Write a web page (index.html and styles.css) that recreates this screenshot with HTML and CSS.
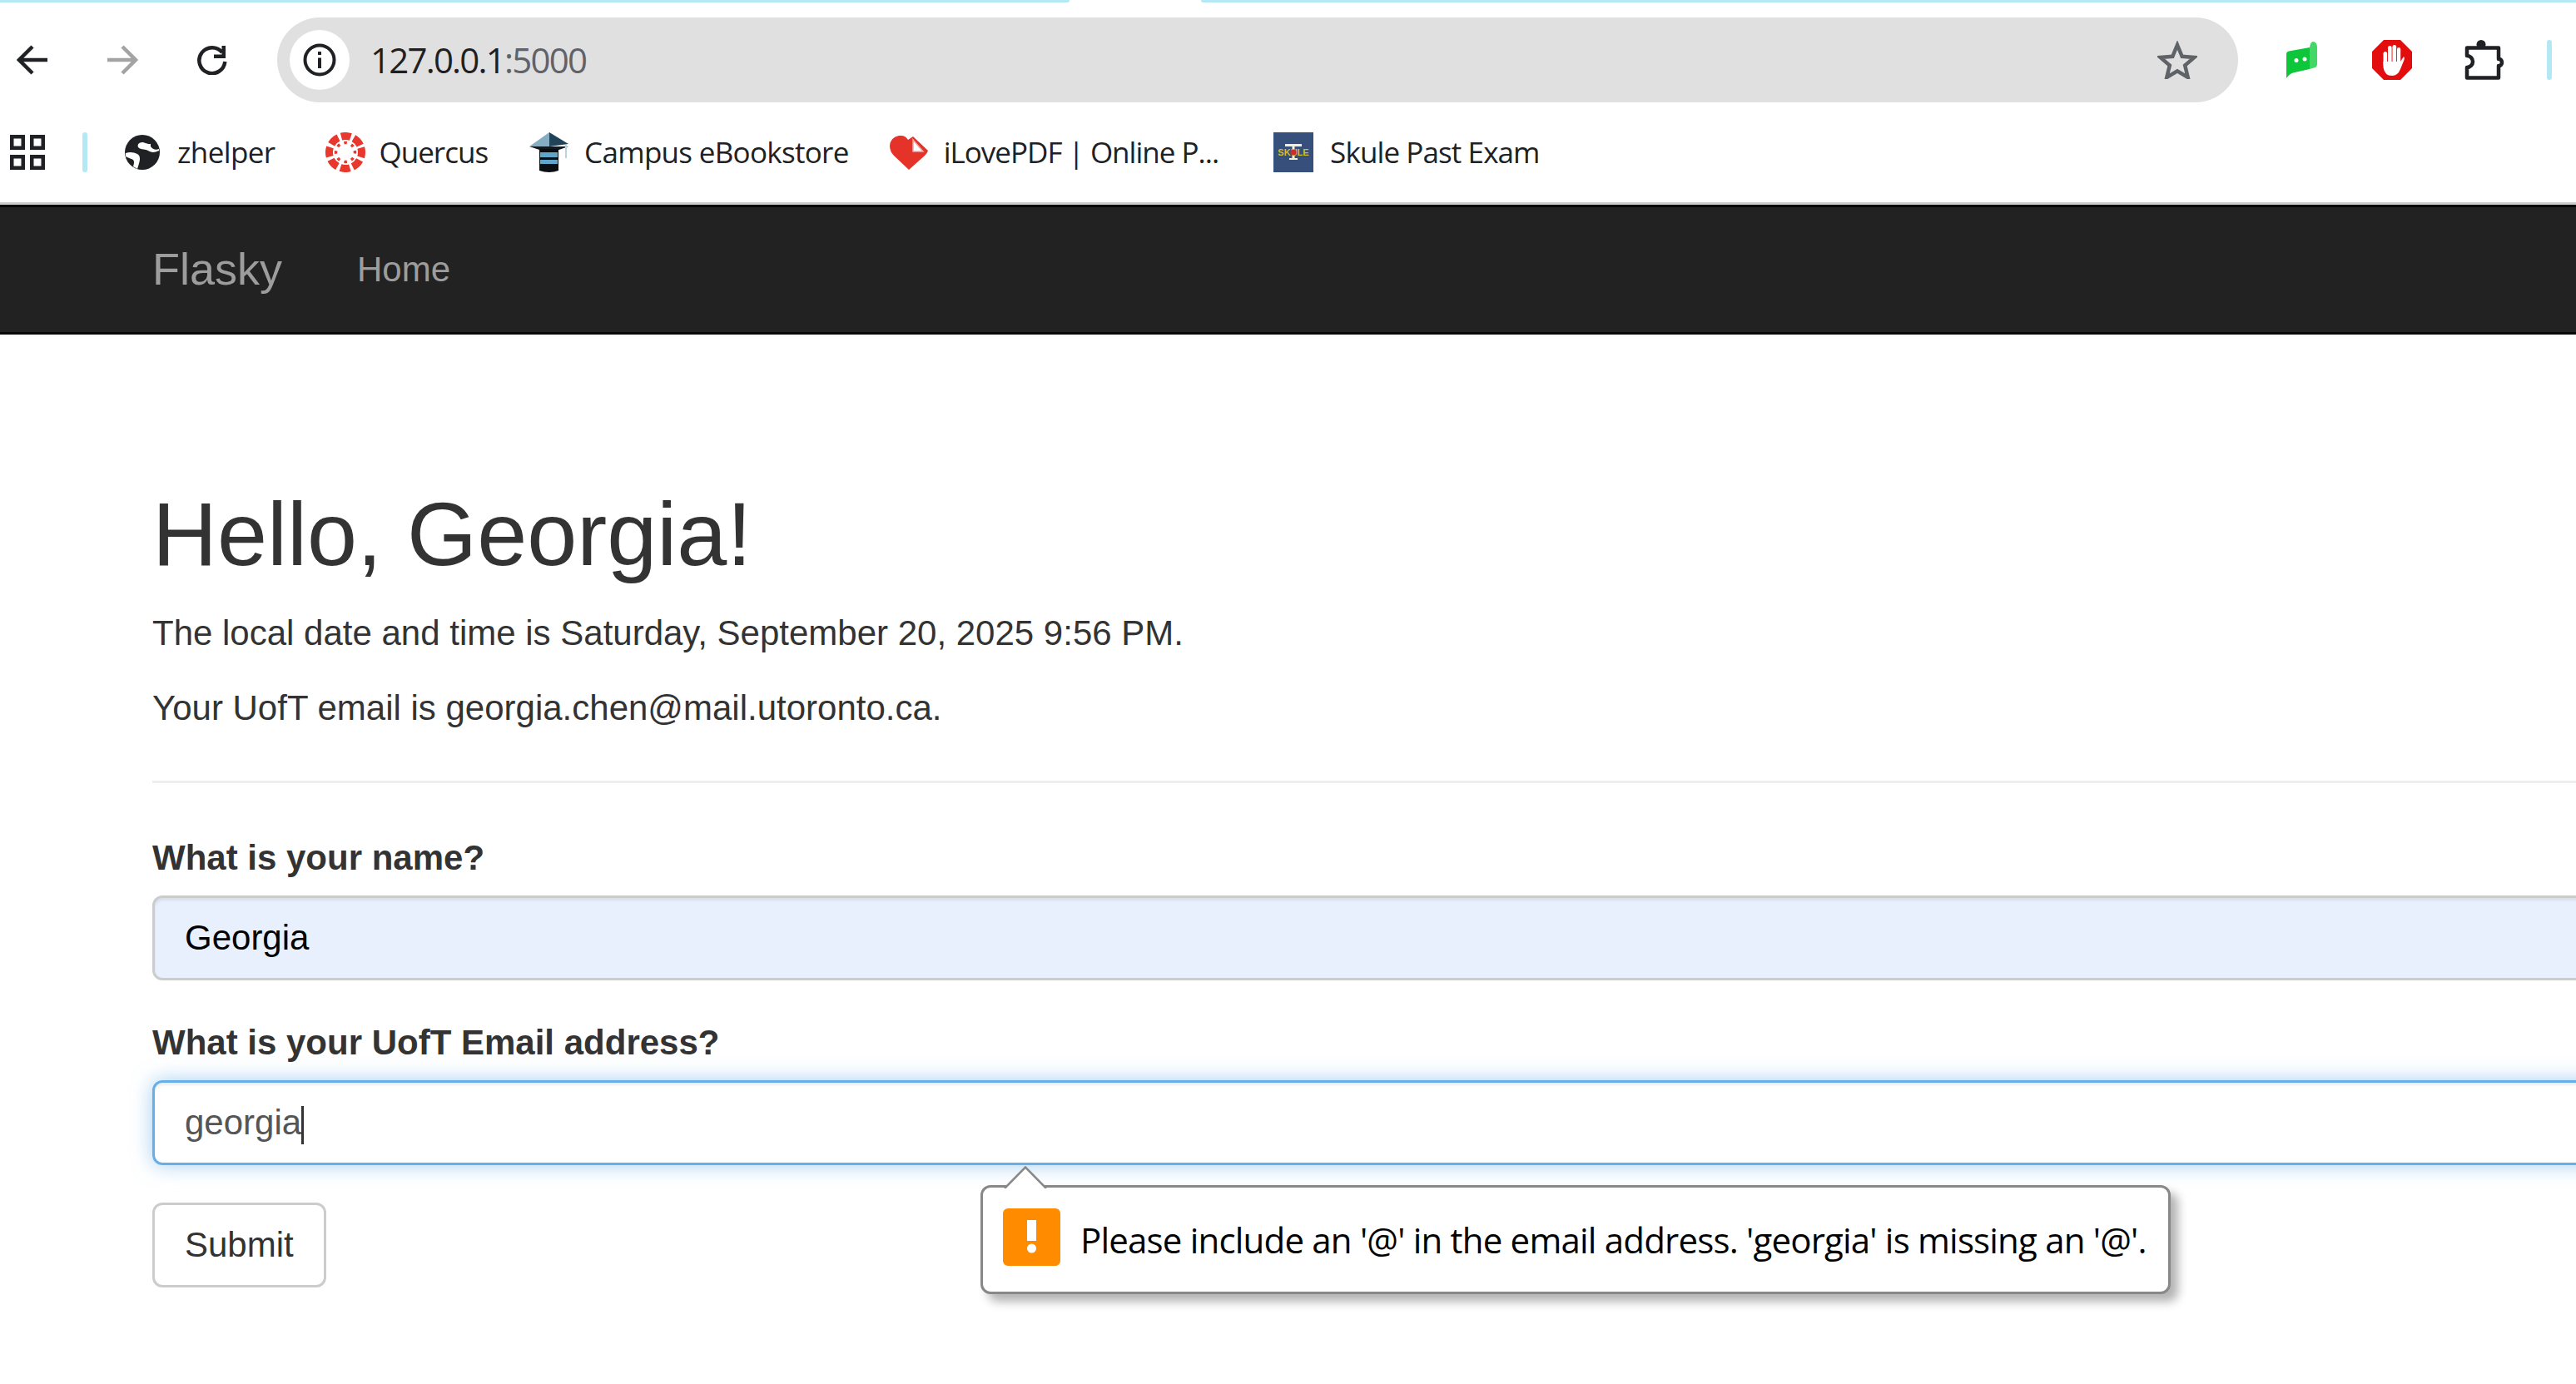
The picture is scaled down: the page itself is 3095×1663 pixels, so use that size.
FILE: index.html
```html
<!DOCTYPE html>
<html lang="en">
<head>
<meta charset="utf-8">
<title>Flasky</title>
<link rel="stylesheet" href="styles.css">
</head>
<body>
<div class="strip"><div class="strip-left"></div><div class="strip-right"></div></div>
<header class="toolbar">
  <svg class="nav-icon" viewBox="0 0 38 36"><path d="M37 18H4M19 2 3 18l16 16" fill="none" stroke="#202124" stroke-width="4.5"/></svg>
  <svg class="nav-icon" viewBox="0 0 38 36"><path d="M1 18h33M19 2l16 16-16 16" fill="none" stroke="#a3a3a3" stroke-width="4.5"/></svg>
  <svg class="nav-icon" viewBox="0 0 38 36"><path d="M31 9A15.500 15.500 0 1 0 34.300 20" fill="none" stroke="#202124" stroke-width="4.500"/><path d="M35 1v15H21v-4.500h9.500V1z" fill="#202124"/></svg>
  <div class="omnibox">
    <div class="chip"><svg class="info" viewBox="0 0 40 40"><circle cx="20" cy="20" r="17.500" fill="none" stroke="#202124" stroke-width="4"/><path d="M18 17.500h4V30h-4zM18 10h4v4h-4z" fill="#202124"/></svg></div>
    <div class="url">127.0.0.1<span class="port">:5000</span></div>
    <svg class="star" viewBox="0 0 48 46"><path d="M24 5l5.700 13.800 14.800 1.100-11.300 9.700 3.500 14.400L24 36.300 11.300 44l3.500-14.400L3.500 19.900l14.800-1.100z" fill="none" stroke="#5f6368" stroke-width="4.500"/></svg>
  </div>
  <svg class="ext-green" viewBox="0 0 37 44"><path d="M0 15q0-3 3-3.500L28 7v26l-18 4Q4 38 0 44z" fill="#0dc63a"/><path d="M28 7q1-7 4-7 5 0 5 8v19q0 4-4 4.500L28 33z" fill="#45d668"/><circle cx="12" cy="22.500" r="2.500" fill="#fff"/><circle cx="22" cy="21" r="2.500" fill="#fff"/></svg>
  <svg class="ext-abp" viewBox="0 0 48 48"><path d="M14 0h20l14 14v20L34 48H14L0 34V14z" fill="#e40d0d"/><g fill="#fff"><rect x="13.500" y="14" width="4.600" height="18" rx="2.300"/><rect x="19" y="7" width="4.600" height="22" rx="2.300"/><rect x="24.500" y="6" width="4.600" height="22" rx="2.300"/><rect x="30" y="9" width="4.200" height="22" rx="2.100"/><path d="M13.500 26H34l4-6q1.500 1 .5 4L34 35q-3 8-10 8-9 0-10.500-10z"/></g></svg>
  <svg class="ext-puzzle" viewBox="0 0 48 48"><path d="M3 9.500h38V23h1.500a4.500 4.500 0 0 1 0 8H41v14.500H3V33a7 7 0 0 0 0-14z" fill="none" stroke="#202124" stroke-width="4.500" stroke-linejoin="round"/><circle cx="20" cy="5.500" r="5.500" fill="#202124"/></svg>
  <div class="tool-sep"></div>
</header>
<nav class="bookmarks">
  <svg class="apps" viewBox="0 0 42 42"><g fill="none" stroke="#202124" stroke-width="4.500"><rect x="2.250" y="2.250" width="13.500" height="13.500"/><rect x="26.250" y="2.250" width="13.500" height="13.500"/><rect x="2.250" y="26.250" width="13.500" height="13.500"/><rect x="26.250" y="26.250" width="13.500" height="13.500"/></g></svg>
  <div class="bm-sep"></div>
  <div class="bm bm-zhelper">
    <svg class="fav-42" viewBox="0 0 42 42"><circle cx="21" cy="21" r="21" fill="#202124"/><path d="M31 11c-6 0-7-2-10-2-5 0-7 4-4 7 3 2 8 1 11 3 3 2 7 3 13 0v-2c-4 2-8 0-10-3zM1 22c5-2 10-1 14 1 5 3 3 9 0 18l-5-3c2-6 1-8-2-9-3-1-5-2-7-3z" fill="#fff"/></svg>
    <span>zhelper</span>
  </div>
  <div class="bm bm-quercus">
    <svg class="fav-48" viewBox="0 0 48 48"><circle cx="24" cy="24" r="19.500" fill="none" stroke="#e8382d" stroke-width="9" stroke-dasharray="11.500 3.810" transform="rotate(-16.500 24 24)"/><circle cx="24" cy="24" r="11.500" fill="none" stroke="#e8382d" stroke-width="3.500" stroke-dasharray="3.500 5.530" transform="rotate(-10 24 24)"/></svg>
    <span>Quercus</span>
  </div>
  <div class="bm bm-campus">
    <svg class="fav-47" viewBox="0 0 47 48"><path d="M24 0 0 17l24 0z" fill="#87adc2"/><path d="M24 0l23 14-23 3z" fill="#1f4459"/><path d="M0 17h47L24 25z" fill="#101820"/><path d="M12 20h23v26q-11 4-23 0z" fill="#0c0f12"/><path d="M13 24h21v6H13zM13 33h21v5H13z" fill="#5ea6ca"/><path d="M44 15v16" stroke="#b8d2de" stroke-width="2"/></svg>
    <span>Campus eBookstore</span>
  </div>
  <div class="bm bm-pdf">
    <svg class="fav-46" viewBox="0 0 46 41"><path d="M23 41 5 24Q0 19 0 12 1 2 11 0q7-1 11 5l6-4 18 17q-1 3-4 6z" fill="#e6332a"/><path d="M28 5l12 14H28z" fill="#fff" stroke="#f2a9a3" stroke-width="1.500"/></svg>
    <span>iLovePDF | Online P...</span>
  </div>
  <div class="bm bm-skule">
    <svg class="fav-48" viewBox="0 0 48 48"><rect width="48" height="48" fill="#364f7b"/><path d="M14 14h20v3h-8.500v14H29v2H19v-2h3.500V17H14z" fill="#f4efd3"/><text class="skule-mark" x="24" y="28" text-anchor="middle">SKULE</text><circle cx="24" cy="24" r="3.500" fill="#d32a2a"/></svg>
    <span>Skule Past Exam</span>
  </div>
</nav>
<div class="navbar">
  <div class="navbar-inner">
    <a class="brand">Flasky</a>
    <a class="nav-link">Home</a>
  </div>
</div>
<main class="container">
  <div class="page-header">
    <h1>Hello, Georgia!</h1>
    <p>The local date and time is Saturday, September 20, 2025 9:56 PM.</p>
    <p>Your UofT email is georgia.chen@mail.utoronto.ca.</p>
  </div>
  <form>
    <div class="form-group">
      <label>What is your name?</label>
      <div class="form-control autofilled">Georgia</div>
    </div>
    <div class="form-group">
      <label>What is your UofT Email address?</label>
      <div class="form-control focused">georgia<span class="caret"></span></div>
    </div>
    <div class="btn">Submit</div>
  </form>
</main>
<div class="bubble">
  <svg class="bubble-arrow" viewBox="0 0 54 27"><path d="M2 27 27 1.500 52 27" fill="#fff" stroke="#888" stroke-width="2.500"/></svg>
  <svg class="warn" viewBox="0 0 69 69"><rect width="69" height="69" rx="6" fill="#ff8c00"/><path d="M29 14h11v25H29z" fill="#fff"/><circle cx="34.500" cy="48" r="5.500" fill="#fff"/></svg>
  <span class="bubble-text">Please include an '@' in the email address. 'georgia' is missing an '@'.</span>
</div>
</body>
</html>
```
FILE: styles.css
```css
* { box-sizing: border-box; }
html, body { margin: 0; padding: 0; }
body {
  position: relative;
  width: 3095px;
  height: 1663px;
  overflow: hidden;
  background: #fff;
  color: #333;
  font-family: "Liberation Sans", Arial, sans-serif;
  font-size: 42px;
  line-height: 60px;
}
svg { display: block; flex: none; }

.strip { display: flex; justify-content: space-between; height: 3px; }
.strip-left { width: 1285px; background: #b5e8f5; border-bottom-right-radius: 3px; }
.strip-right { width: 1652px; background: #b5e8f5; border-bottom-left-radius: 3px; }

.toolbar {
  display: flex;
  align-items: center;
  padding: 18px 0 12px 20px;
}
.nav-icon { width: 38px; height: 36px; margin-right: 70px; }
.nav-icon:nth-of-type(3) { margin-right: 59px; }
.omnibox {
  display: flex;
  align-items: center;
  width: 2356px;
  height: 102px;
  padding: 0 49px 0 15px;
  background: #e0e0e0;
  border-radius: 51px;
}
.chip {
  display: flex;
  align-items: center;
  justify-content: center;
  width: 72px;
  height: 72px;
  background: #fff;
  border-radius: 50%;
}
.info { width: 40px; height: 40px; }
.url {
  margin-left: 25px;
  font-family: "Open Sans", sans-serif;
  font-size: 42px;
  letter-spacing: -1.8px;
  color: #1f1f1f;
}
.port { color: #5f6368; }
.star { width: 48px; height: 46px; margin-left: auto; }
.ext-green { width: 37px; height: 44px; margin-left: 58px; }
.ext-abp { width: 48px; height: 48px; margin-left: 66px; }
.ext-puzzle { width: 48px; height: 48px; margin-left: 63px; }
.tool-sep { width: 6px; height: 48px; margin-left: 51px; background: #b5e8f5; border-radius: 3px; }

.bookmarks {
  display: flex;
  align-items: center;
  height: 108px;
  padding: 0 0 12px 12px;
  font-family: "Open Sans", sans-serif;
  font-size: 35px;
  letter-spacing: -0.6px;
  color: #202124;
}
.apps { width: 42px; height: 42px; }
.bm-sep { width: 6px; height: 48px; margin-left: 45px; background: #b5e8f5; border-radius: 3px; }
.bm { display: flex; align-items: center; }
.bm-zhelper { margin-left: 45px; gap: 21px; }
.bm-quercus { margin-left: 60px; gap: 17px; letter-spacing: -1px; }
.bm-campus { margin-left: 50px; gap: 19px; letter-spacing: -0.7px; }
.bm-pdf { margin-left: 49px; gap: 19px; letter-spacing: -1px; }
.bm-skule { margin-left: 66px; gap: 20px; letter-spacing: -0.9px; }
.fav-42 { width: 42px; height: 42px; }
.fav-46 { width: 46px; height: 41px; }
.fav-47 { width: 47px; height: 48px; }
.fav-48 { width: 48px; height: 48px; }
.skule-mark { font: bold 11px "Liberation Sans", sans-serif; fill: #d6bd2c; letter-spacing: 0; }

.navbar {
  height: 159px;
  background: #222;
  border-top: 3px solid #ccc;
  border-bottom: 3px solid #080808;
  box-shadow: inset 0 3px 0 #080808;
}
.navbar-inner { display: flex; align-items: center; height: 153px; padding-left: 183px; color: #9d9d9d; }
.brand { font-size: 54px; }
.nav-link { margin-left: 90px; padding-top: 3px; }

.container { width: 3400px; padding: 0 45px 0 183px; }
.page-header { margin-top: 180px; border-bottom: 3px solid #eee; padding-bottom: 27px; margin-bottom: 60px; }
h1 { margin: 0 0 30px; font-size: 108px; font-weight: 400; line-height: 119px; }
p { margin: 0 0 30px; }
.form-group { margin-bottom: 45px; }
label { display: block; margin-bottom: 15px; font-weight: 700; }
.form-control {
  height: 102px;
  padding: 18px 36px;
  border: 3px solid #ccc;
  border-radius: 12px;
  color: #555;
  box-shadow: inset 0 3px 3px rgba(0,0,0,.075);
}
.autofilled { background: #e8f0fe; color: #000; }
.focused {
  border-color: #66afe9;
  box-shadow: inset 0 3px 3px rgba(0,0,0,.075), 0 0 24px rgba(102,175,233,.6);
}
.caret { display: inline-block; width: 3px; height: 46px; margin-left: 0; background: #333; vertical-align: -12px; }
.btn {
  display: inline-block;
  padding: 18px 36px;
  border: 3px solid #ccc;
  border-radius: 12px;
  background: #fff;
}

.bubble {
  position: absolute;
  left: 1178px;
  top: 1424px;
  display: flex;
  align-items: center;
  gap: 24px;
  width: 1430px;
  height: 131px;
  padding: 0 0 0 24px;
  background: #fff;
  border: 3px solid #888;
  border-radius: 12px;
  box-shadow: 9px 9px 12px rgba(0,0,0,.3);
  font-family: "Open Sans", sans-serif;
  font-size: 42px;
  letter-spacing: -0.8px;
  color: #000;
}
.bubble-arrow { position: absolute; left: 24px; top: -26px; width: 54px; height: 27px; }
.warn { width: 69px; height: 69px; margin-bottom: 7px; }
```
